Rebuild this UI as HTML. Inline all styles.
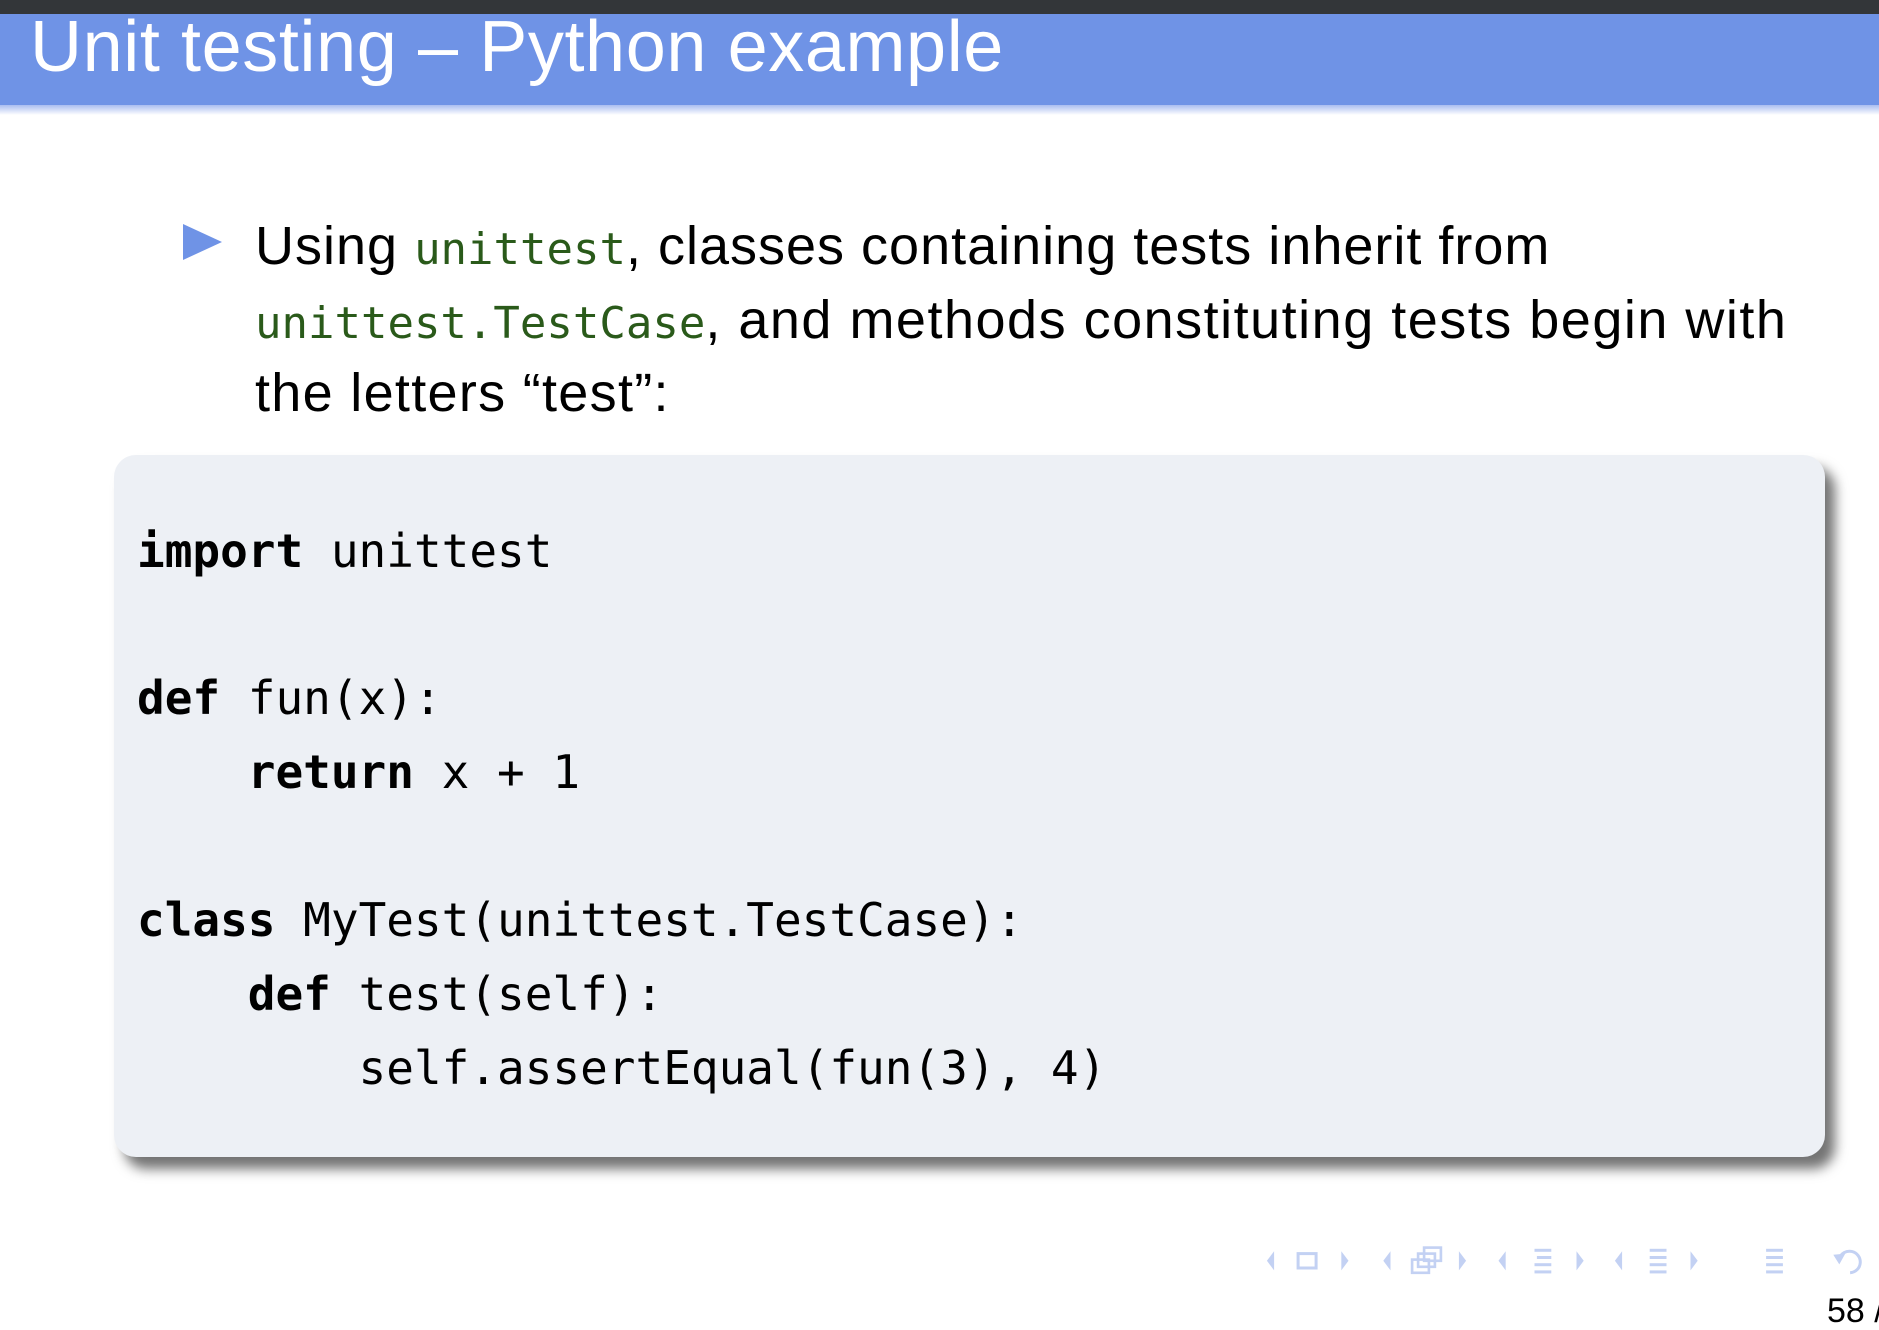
<!DOCTYPE html>
<html><head><meta charset="utf-8"><style>
body{margin:0;width:1879px;height:1305px;position:relative;overflow:hidden;background:#fff;font-family:"Liberation Sans","DejaVu Sans",sans-serif}
.dark{position:absolute;left:0;top:0;width:1879px;height:14px;background:#333639}
.blue{position:absolute;left:0;top:14px;width:1879px;height:91px;background:#6f93e6}
.grad{position:absolute;left:0;top:105px;width:1879px;height:10px;background:linear-gradient(#a9bdf0,#fff)}
.title{position:absolute;left:30px;top:2px;font-size:72px;color:#fff;line-height:90px;white-space:nowrap;letter-spacing:0.6px}
.tri{position:absolute;left:183px;top:224px;width:0;height:0;border-top:18px solid transparent;border-bottom:18px solid transparent;border-left:39px solid #6f93e6}
.txt{position:absolute;left:255px;font-size:54px;letter-spacing:1.3px;color:#000;white-space:nowrap;line-height:1}
.g{font-family:"DejaVu Sans Mono",monospace;color:#2a5a1a;font-size:44px;letter-spacing:0}
.box{position:absolute;left:114px;top:455px;width:1711px;height:702px;background:#edf0f5;border-radius:22px;box-shadow:10px 12px 12px rgba(0,0,0,.55)}
.code{position:absolute;left:137px;font-family:"DejaVu Sans Mono",monospace;font-size:46px;color:#000;white-space:pre;line-height:1}
.code b{font-weight:bold}
.pg{position:absolute;left:1827px;top:1294px;font-size:34px;color:#000;white-space:nowrap;line-height:1}
</style></head><body>
<div class="dark"></div><div class="blue"></div><div class="grad"></div>
<div class="title">Unit testing – Python example</div>
<div class="tri"></div>
<div class="txt" style="top:219px;letter-spacing:1px">Using <span class="g">unittest</span>, classes containing tests inherit from</div>
<div class="txt" style="top:293px;letter-spacing:1.5px"><span class="g">unittest.TestCase</span>, and methods constituting tests begin with</div>
<div class="txt" style="top:366px">the letters “test”:</div>
<div class="box"></div>
<div class="code" style="top:528px"><b>import</b> unittest</div>
<div class="code" style="top:675px"><b>def</b> fun(x):</div>
<div class="code" style="top:749px">    <b>return</b> x + 1</div>
<div class="code" style="top:897px"><b>class</b> MyTest(unittest.TestCase):</div>
<div class="code" style="top:971px">    <b>def</b> test(self):</div>
<div class="code" style="top:1045px">        self.assertEqual(fun(3), 4)</div>
<svg style="position:absolute;left:1262px;top:1244px" width="617" height="36" viewBox="0 0 514 30" fill="#c3d1f3" stroke="#c3d1f3">
<polygon points="10,6 4,14 10,22" stroke="none"/>
<rect x="30" y="8" width="15" height="12" fill="none" stroke-width="2.5"/>
<polygon points="66,6 72,14 66,22" stroke="none"/>
<polygon points="107,6 101,14 107,22" stroke="none"/>
<rect x="125" y="13" width="14" height="11" fill="none" stroke-width="2.2"/>
<rect x="130" y="8" width="14" height="11" fill="none" stroke-width="2.2"/>
<rect x="135" y="3" width="14" height="11" fill="none" stroke-width="2.2"/>
<polygon points="164,6 170,14 164,22" stroke="none"/>
<polygon points="203,6 197,14 203,22" stroke="none"/>
<rect x="227" y="4" width="14" height="2.5" stroke="none"/><rect x="229" y="10" width="12" height="2.5" stroke="none"/><rect x="227" y="16" width="14" height="2.5" stroke="none"/><rect x="227" y="22" width="14" height="2.5" stroke="none"/>
<polygon points="262,6 268,14 262,22" stroke="none"/>
<polygon points="300,6 294,14 300,22" stroke="none"/>
<rect x="323" y="4" width="14" height="2.5" stroke="none"/><rect x="323" y="10" width="14" height="2.5" stroke="none"/><rect x="323" y="16" width="14" height="2.5" stroke="none"/><rect x="323" y="22" width="14" height="2.5" stroke="none"/>
<polygon points="357,6 363,14 357,22" stroke="none"/>
<rect x="420" y="4" width="14" height="2.5" stroke="none"/><rect x="420" y="10" width="14" height="2.5" stroke="none"/><rect x="420" y="16" width="14" height="2.5" stroke="none"/><rect x="420" y="22" width="14" height="2.5" stroke="none"/>
<path d="M490 24 A9 9 0 1 0 481 12" fill="none" stroke-width="2.5"/><polygon points="476,9 486,8 481,17" stroke="none"/>
</svg>
<div class="pg">58 /</div>
</body></html>
